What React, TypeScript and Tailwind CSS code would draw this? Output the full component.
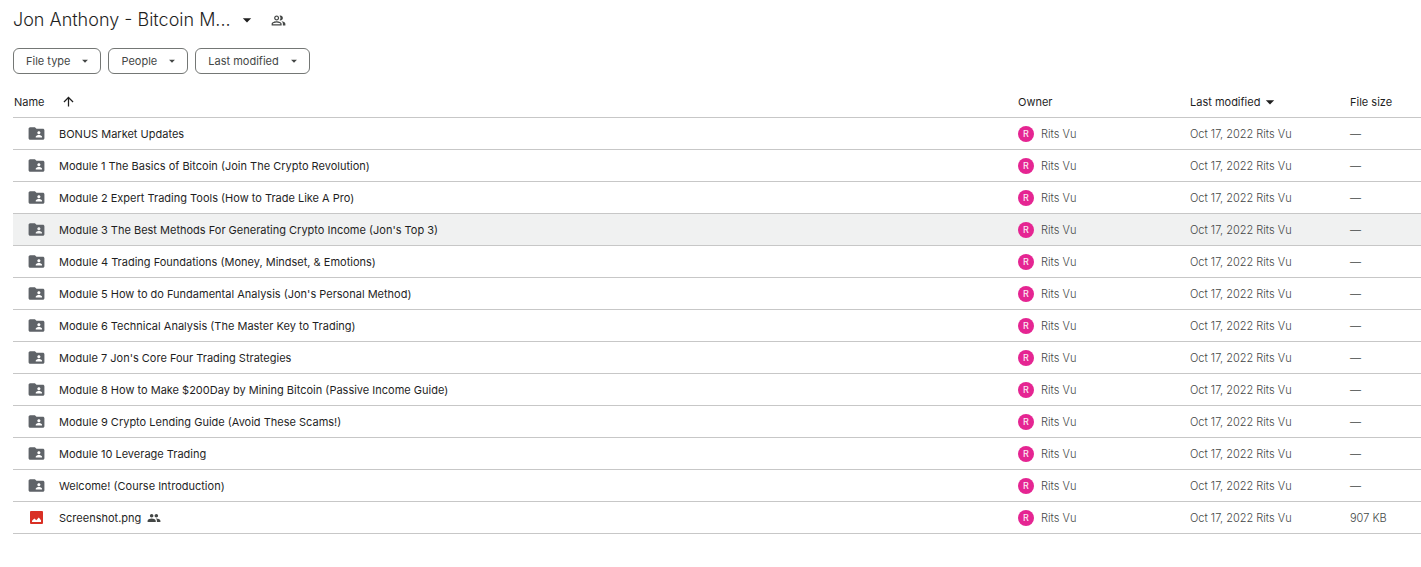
import {
    MdArrowDropDown,
    MdArrowUpward,
    MdFolderShared,
    MdOutlinePeopleAlt,
    MdPeople,
} from "react-icons/md";

const filters = ["File type", "People", "Last modified"];

const files = [
    { name: "BONUS Market Updates" },
    { name: "Module 1 The Basics of Bitcoin (Join The Crypto Revolution)" },
    { name: "Module 2 Expert Trading Tools (How to Trade Like A Pro)" },
    { name: "Module 3 The Best Methods For Generating Crypto Income (Jon's Top 3)", active: true },
    { name: "Module 4 Trading Foundations (Money, Mindset, & Emotions)" },
    { name: "Module 5 How to do Fundamental Analysis (Jon's Personal Method)" },
    { name: "Module 6 Technical Analysis (The Master Key to Trading)" },
    { name: "Module 7 Jon's Core Four Trading Strategies" },
    { name: "Module 8 How to Make $200Day by Mining Bitcoin (Passive Income Guide)" },
    { name: "Module 9 Crypto Lending Guide (Avoid These Scams!)" },
    { name: "Module 10 Leverage Trading" },
    { name: "Welcome! (Course Introduction)" },
    { name: "Screenshot.png", size: "907 KB", image: true },
];

function ImageIcon() {
    return (
        <svg viewBox="0 0 13 13" className="size-[13px]" aria-hidden="true">
            <rect width="13" height="13" rx="1" fill="#d93025" />
            <path d="M2 11V9.7l2.4-2.2 1.9 1.7L8.8 6.6l2.2 2.6V11z" fill="#fff" />
        </svg>
    );
}

export default function App() {
    return (
        <main className="bg-white pl-[13px] font-['Inter','Liberation_Sans',sans-serif] text-[#1f1f1f]">
            <div className="flex h-10 items-center">
                <h1>
                    <button type="button" className="flex items-center gap-1.5 text-lg font-light whitespace-nowrap">
                        Jon Anthony - Bitcoin M...
                        <MdArrowDropDown size={20} />
                    </button>
                </h1>
                <button type="button" aria-label="Shared with" className="ml-3.5 text-[#444746]">
                    <MdOutlinePeopleAlt size={15} />
                </button>
            </div>

            <div className="flex gap-[7px] pt-2">
                {filters.map((label) => (
                    <button
                        key={label}
                        type="button"
                        className="flex h-[26px] items-center gap-2 rounded-md border border-[#747775] pr-2 pl-3 text-[11px] leading-4 text-[#444746]"
                    >
                        {label}
                        <MdArrowDropDown size={14} />
                    </button>
                ))}
            </div>

            <table className="mt-3 w-full table-fixed border-separate border-spacing-0 text-left text-[11px] leading-4 whitespace-nowrap">
                <colgroup>
                    <col />
                    <col className="w-[172px]" />
                    <col className="w-40" />
                    <col className="w-[71px]" />
                </colgroup>
                <thead>
                    <tr className="h-8 *:border-b *:border-[#c7c7c7] *:font-normal">
                        <th>
                            <button type="button" className="flex items-center gap-4 pl-px">
                                Name
                                <MdArrowUpward size={15} />
                            </button>
                        </th>
                        <th>Owner</th>
                        <th>
                            <button type="button" className="flex items-center">
                                Last modified
                                <MdArrowDropDown size={20} className="-my-1" />
                            </button>
                        </th>
                        <th>File size</th>
                    </tr>
                </thead>
                <tbody>
                    {files.map((file) => (
                        <tr
                            key={file.name}
                            className={`h-8 *:border-b *:border-[#c7c7c7] ${file.active ? "bg-[#f0f1f1]" : ""}`}
                        >
                            <td>
                                <div className="flex h-4 items-center pl-[15px]">
                                    <span className="mr-[15px] flex w-4 justify-center text-[#5f6368]">
                                        {file.image ? <ImageIcon /> : <MdFolderShared size={19} className="shrink-0" />}
                                    </span>
                                    {file.name}
                                    {file.image && <MdPeople size={14} className="ml-1.5 text-[#444746]" />}
                                </div>
                            </td>
                            <td className="font-light text-[#444746]">
                                <div className="flex items-center gap-[7px]">
                                    <span className="flex size-4 items-center justify-center rounded-full bg-[#e52592] text-[9px] font-medium text-pink-100">
                                        R
                                    </span>
                                    Rits Vu
                                </div>
                            </td>
                            <td className="font-light text-[#444746]">
                                <div className="flex gap-[3px]">
                                    <span>Oct 17, 2022</span>
                                    <span>Rits Vu</span>
                                </div>
                            </td>
                            <td className="font-light text-[#444746]">{file.size ?? "—"}</td>
                        </tr>
                    ))}
                </tbody>
            </table>
        </main>
    );
}
